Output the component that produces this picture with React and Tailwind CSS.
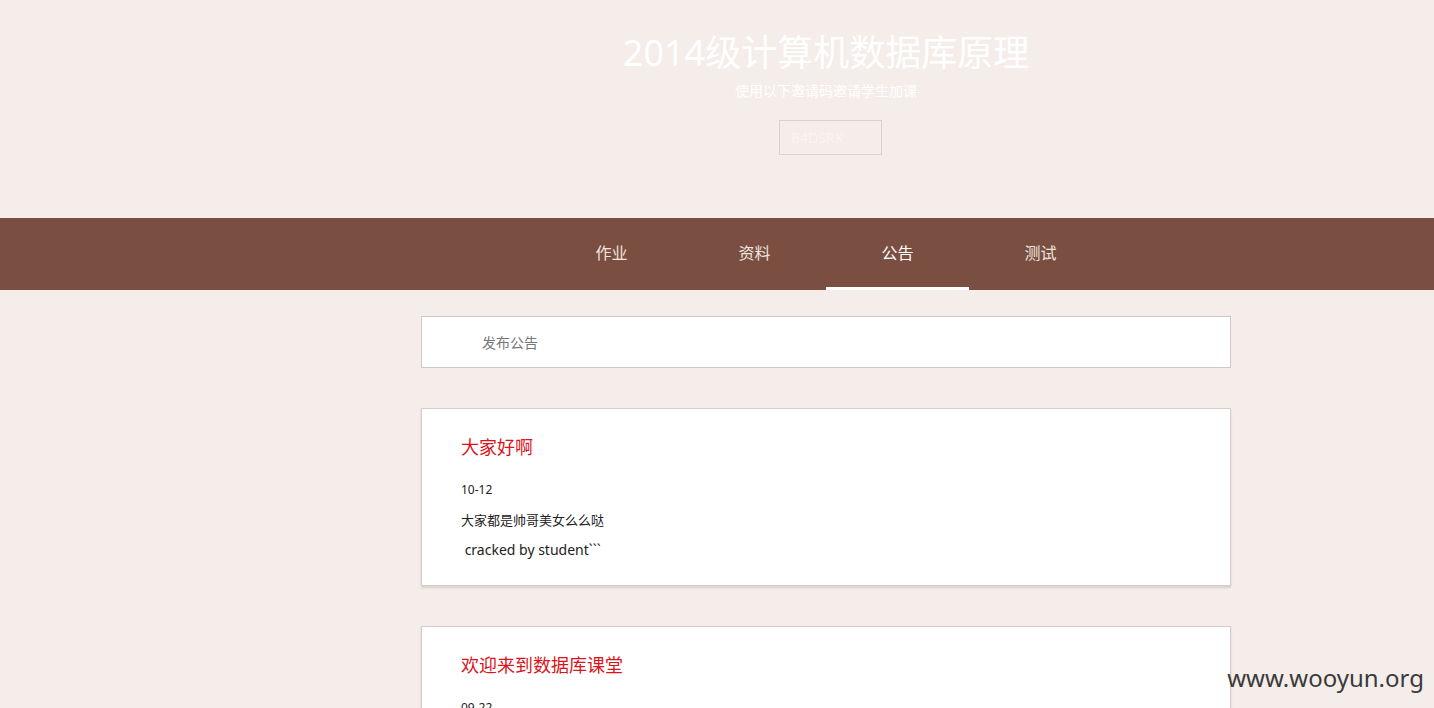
import React, { useState } from "react";

const tabs = ["作业", "资料", "公告", "测试"];

const notices = [
  {
    title: "大家好啊",
    date: "10-12",
    lines: ["大家都是帅哥美女么么哒"],
    extra: "\u00a0cracked by student```",
  },
  {
    title: "欢迎来到数据库课堂",
    date: "09-22",
    lines: [],
  },
];

function App() {
  const [active, setActive] = useState("公告");

  return (
    <div
      className="bg-[#f5edea] overflow-hidden h-[708px] relative"
      style={{ fontFamily: '"Noto Sans", "Noto Sans CJK SC", sans-serif' }}
    >
      {/* header */}
      <div className="h-[218px] flex flex-col items-center pl-[218px] pt-[27px]">
        <h1 className="text-[36px] leading-[52px] text-white font-normal">
          2014级计算机数据库原理
        </h1>
        <p className="text-[14px] leading-[20px] text-white mt-[2px]">
          使用以下邀请码邀请学生加课
        </p>
        <div className="mt-[19px] ml-[9px] w-[103px] h-[35px] border border-[#d9d2cf] flex items-center pl-[11px] text-[14px] text-[#faf4f2]">
          B4DSRK
        </div>
      </div>

      {/* nav */}
      <div className="h-[72px] bg-[#7a4f42] flex pl-[540px]">
        {tabs.map((t) => (
          <button
            key={t}
            onClick={() => setActive(t)}
            className={
              "w-[143px] h-[72px] flex items-center justify-center text-[16px] border-b-[3px] " +
              (active === t
                ? "text-white border-white"
                : "text-[#efe4df] border-transparent")
            }
          >
            {t}
          </button>
        ))}
      </div>

      {/* content */}
      <div className="ml-[421px] w-[810px] pt-[26px] flex flex-col gap-[40px]">
        <div className="h-[52px] bg-white border border-[#cfc8c6] flex items-center pl-[60px] text-[14px] text-[#777]">
          发布公告
        </div>

        {notices.map((n) => (
          <div
            key={n.title}
            className="bg-white border border-[#d3cdcb] shadow-[0_2px_2px_rgba(0,0,0,0.12)] px-[39px] pt-[24px] pb-[25px]"
          >
            <h2 className="text-[18px] leading-[28px] text-[#d9141b]">{n.title}</h2>
            <div className="mt-[20px] text-[12px] leading-[18px] text-[#222]">{n.date}</div>
            {n.lines.map((l) => (
              <div key={l} className="mt-[12px] text-[13px] leading-[18px] text-[#222]">
                {l}
              </div>
            ))}
            {n.extra && (
              <div className="mt-[11px] text-[14px] leading-[20px] text-[#222]">{n.extra}</div>
            )}
          </div>
        ))}
      </div>

      {/* watermark */}
      <div className="absolute right-[10px] top-[662px] text-[24px] leading-[32px] text-[#3a3a3a]">
        www.wooyun.org
      </div>
    </div>
  );
}

export default App;
